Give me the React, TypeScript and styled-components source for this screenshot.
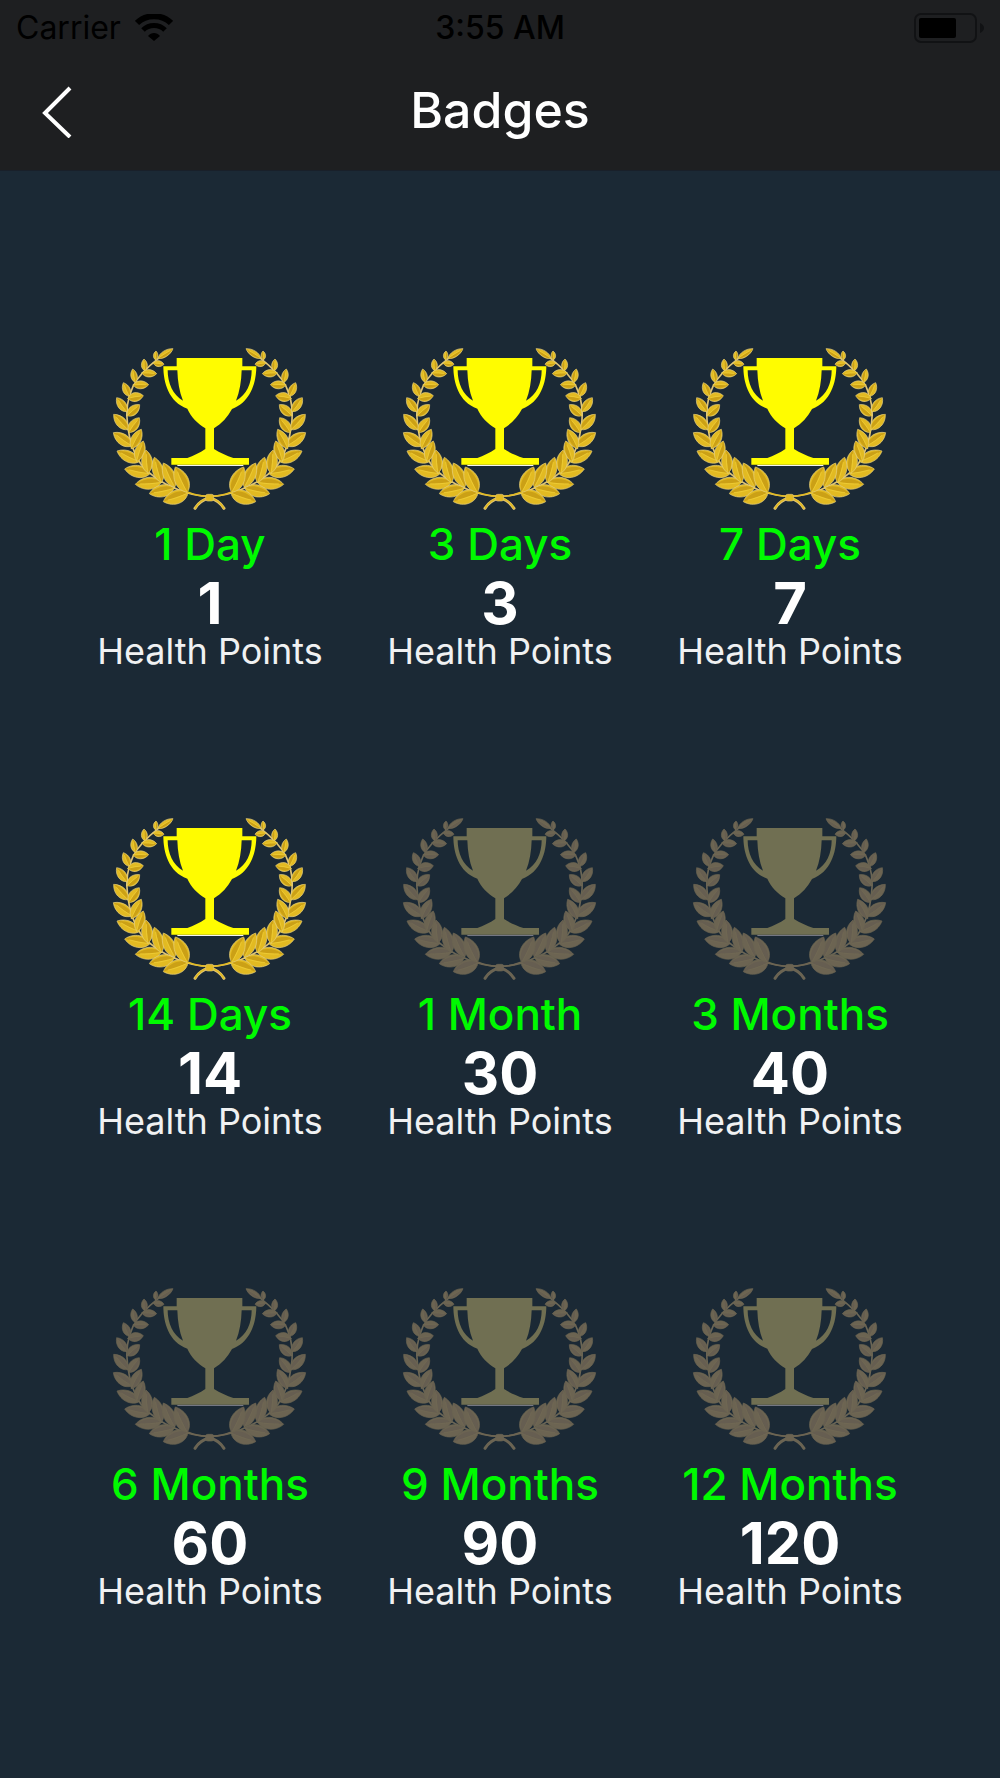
import React from "react";
import styled, { createGlobalStyle } from "styled-components";

const GlobalStyle = createGlobalStyle`
  *, *::before, *::after { box-sizing: border-box; }
  body {
    margin: 0;
    background: #1b2935;
    color: #fff;
    font-family: Inter, "Liberation Sans", sans-serif;
  }
`;

const Screen = styled.div`
  min-height: 100vh;
  background: #1b2935;
`;

const Header = styled.header`
  background: #1e1f21;
  border-bottom: 1px solid #19202a;
`;

const StatusBar = styled.div`
  display: grid;
  grid-template-columns: 1fr auto 1fr;
  align-items: center;
  height: 56px;
  padding: 0 16px;
  color: #000;
  font-size: 32px;
  line-height: 56px;
`;

const Carrier = styled.div`
  display: flex;
  align-items: center;
  gap: 14px;
`;

const Clock = styled.time`
  font-weight: 500;
`;

const BatteryIcon = styled.svg`
  justify-self: end;
`;

const NavBar = styled.div`
  display: grid;
  grid-template-columns: 1fr auto 1fr;
  align-items: start;
  height: 114px;
  padding: 24px 36px 0;
`;

const BackButton = styled.button`
  display: flex;
  justify-self: start;
  padding: 4px;
  border: 0;
  background: none;
  color: #fff;
  cursor: pointer;
`;

const Title = styled.h1`
  margin: 0;
  font-size: 50px;
  font-weight: 500;
  line-height: 60px;
`;

const BadgeGrid = styled.ul`
  display: grid;
  grid-template-columns: repeat(3, 1fr);
  row-gap: 136px;
  margin: 0;
  padding: 164px 65px;
  list-style: none;
`;

const BadgeCard = styled.li`
  display: flex;
  flex-direction: column;
  align-items: center;
  white-space: nowrap;
`;

const BadgeArt = styled.svg`
  display: block;
  width: 220px;
  height: 180px;
`;

const Duration = styled.h2`
  margin: 0;
  color: #00fa00;
  font-size: 44px;
  font-weight: 500;
  line-height: 58px;
`;

const Points = styled.strong`
  font-size: 58px;
  font-weight: 700;
  line-height: 60px;
`;

const PointsLabel = styled.span`
  color: #f0f1f2;
  font-size: 36px;
  line-height: 36px;
`;

// Each leaf: base x, base y, tip x, tip y, half width.
const leaves: [number, number, number, number, number][] = [
  [174, 70, 219, 41, 12],
  [166, 74, 168, 48, 9],
  [160, 84, 192, 88, 12],
  [134, 107, 132, 72, 12],
  [126, 114, 170, 116, 15],
  [106, 142, 98, 102, 13],
  [100, 150, 146, 149, 16],
  [88, 184, 70, 143, 15],
  [84, 190, 130, 182, 18],
  [80, 230, 50, 188, 17],
  [82, 242, 119, 209, 18],
  [84, 284, 41, 238, 20],
  [86, 292, 118, 248, 19],
  [96, 333, 40, 293, 22],
  [94, 340, 124, 283, 20],
  [118, 380, 51, 348, 22],
  [110, 378, 130, 318, 20],
  [150, 416, 74, 402, 24],
  [144, 414, 138, 345, 22],
  [184, 442, 106, 448, 24],
  [184, 442, 163, 367, 22],
  [222, 460, 148, 476, 24],
  [224, 456, 190, 384, 23],
  [264, 474, 190, 500, 27],
  [262, 472, 226, 396, 27],
];

function leafShape([bx, by, tx, ty, w]: (typeof leaves)[number]) {
  const dx = tx - bx;
  const dy = ty - by;
  const len = Math.hypot(dx, dy);
  const nx = (-dy / len) * w;
  const ny = (dx / len) * w;
  const at = (t: number, side: number) =>
    `${(bx + dx * t + nx * side).toFixed(1)} ${(by + dy * t + ny * side).toFixed(1)}`;
  return {
    outline: `M${bx} ${by} C${at(0.2, 1)} ${at(0.7, 1)} ${tx} ${ty} C${at(0.7, -1)} ${at(0.2, -1)} ${bx} ${by}Z`,
    shade: `M${bx} ${by} C${at(0.2, 0.7)} ${at(0.65, 0.7)} ${tx} ${ty} Q${at(0.5, 0)} ${bx} ${by}Z`,
    vein: `M${bx} ${by} Q${at(0.5, -0.15)} ${at(0.8, 0)}`,
  };
}

const leafShapes = leaves.map(leafShape);

const earnedColors = {
  cup: "#fffc00",
  leaf: "#e2ba22",
  shade: "#cba016",
  edge: "#e6d084",
  vein: "#f2d23c",
  stem: "#dfc477",
  ground: "#f4f4ef",
};

const lockedColors = {
  cup: "#706f52",
  leaf: "#6c6452",
  shade: "#665e51",
  edge: "#696352",
  vein: "#716955",
  stem: "#6b6656",
  ground: "#747783",
};

function Branch({ colors }: { colors: typeof earnedColors }) {
  return (
    <g strokeLinecap="round" strokeLinejoin="round">
      <path
        d="M178 68C140 98 114 124 99 154C83 188 76 226 83 272C88 314 97 350 122 386C150 422 190 446 230 462C264 477 294 484 329 484"
        fill="none"
        stroke={colors.stem}
        strokeWidth="5"
      />
      {leafShapes.map((leaf) => (
        <g key={leaf.outline}>
          <path d={leaf.outline} fill={colors.leaf} stroke={colors.edge} strokeWidth="2" />
          <path d={leaf.shade} fill={colors.shade} />
          <path d={leaf.vein} fill="none" stroke={colors.vein} strokeWidth="2" />
        </g>
      ))}
      <path d="M326 490C308 494 294 506 285 520" fill="none" stroke={colors.stem} strokeWidth="9" />
      <path d="M326 489C308 493 294 505 286 519" fill="none" stroke={colors.leaf} strokeWidth="5" />
      <path d="M264 472C284 480 304 484 326 484" fill="none" stroke={colors.leaf} strokeWidth="5" />
    </g>
  );
}

function Trophy({ earned }: { earned: boolean }) {
  const colors = earned ? earnedColors : lockedColors;
  return (
    <BadgeArt viewBox="0 0 660 540" role="img" aria-label={earned ? "Earned" : "Locked"}>
      <Branch colors={colors} />
      <g transform="translate(657 0) scale(-1 1)">
        <Branch colors={colors} />
      </g>
      <rect x="317" y="478" width="24" height="20" rx="6" fill={colors.leaf} stroke={colors.stem} strokeWidth="2" />
      <path d="M232 391H430" stroke={colors.ground} strokeWidth="4" />
      <path
        fill={colors.cup}
        fillRule="evenodd"
        d="M230 69H427V94H469C469 142 452 202 396 222C383 246 365 266 342 280V342C360 354 380 362 400 369H447V389H214V369H262C280 362 300 354 316 342V280C293 266 273 246 262 221C206 202 190 142 190 94H230ZM232 106H203C203 144 219 181 249 197C238 170 233 140 232 106ZM425 106C424 140 419 170 408 197C440 181 455 144 455 106Z"
      />
    </BadgeArt>
  );
}

const badges = [
  { duration: "1 Day", points: 1, earned: true },
  { duration: "3 Days", points: 3, earned: true },
  { duration: "7 Days", points: 7, earned: true },
  { duration: "14 Days", points: 14, earned: true },
  { duration: "1 Month", points: 30, earned: false },
  { duration: "3 Months", points: 40, earned: false },
  { duration: "6 Months", points: 60, earned: false },
  { duration: "9 Months", points: 90, earned: false },
  { duration: "12 Months", points: 120, earned: false },
];

export default function App() {
  return (
    <Screen>
      <GlobalStyle />
      <Header>
        <StatusBar>
          <Carrier>
            <span>Carrier</span>
            <svg width="38" height="28" viewBox="0 0 38 28" aria-hidden="true">
              <path d="M2 9C11 0 27 0 36 9" fill="none" stroke="#000" strokeWidth="6" />
              <path d="M8 16C14 10 24 10 30 16" fill="none" stroke="#000" strokeWidth="5" />
              <path d="M19 27L13 22C16 18 22 18 25 22Z" />
            </svg>
          </Carrier>
          <Clock>3:55 AM</Clock>
          <BatteryIcon width="70" height="30" viewBox="0 0 70 30" aria-hidden="true">
            <rect x="1" y="1" width="61" height="28" rx="6" fill="none" stroke="#111214" strokeWidth="2" />
            <rect x="5" y="5" width="37" height="20" rx="2" />
            <path d="M66 10Q70 12 70 15T66 20Z" fill="#111214" />
          </BatteryIcon>
        </StatusBar>
        <NavBar>
          <BackButton type="button" aria-label="Back">
            <svg width="32" height="54" viewBox="0 0 32 54" aria-hidden="true">
              <path
                d="M30 4L5 29L30 53"
                fill="none"
                stroke="currentColor"
                strokeWidth="4"
              />
            </svg>
          </BackButton>
          <Title>Badges</Title>
        </NavBar>
      </Header>
      <main>
        <BadgeGrid>
          {badges.map((badge) => (
            <BadgeCard key={badge.duration}>
              <Trophy earned={badge.earned} />
              <Duration>{badge.duration}</Duration>
              <Points>{badge.points}</Points>
              <PointsLabel>Health Points</PointsLabel>
            </BadgeCard>
          ))}
        </BadgeGrid>
      </main>
    </Screen>
  );
}
